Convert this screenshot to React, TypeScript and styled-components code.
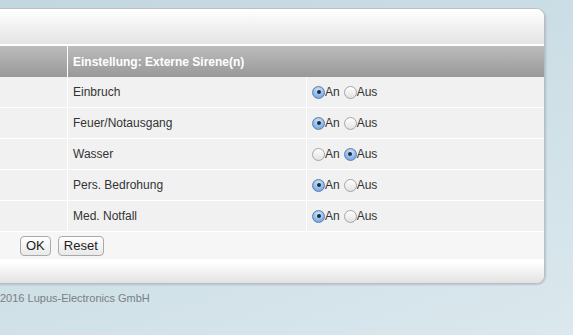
import styled, { createGlobalStyle } from "styled-components";

const Global = createGlobalStyle`
  html, body {
    margin: 0;
    height: 100%;
  }
  body {
    background: linear-gradient(160deg, #c3d7df 0%, #cfe0e7 55%, #dbe8ee 100%);
    font-family: "Liberation Sans", Arial, sans-serif;
    overflow: hidden;
  }
`;

const Page = styled.div`
  width: 573px;
  height: 335px;
  padding-top: 8px;
  box-sizing: border-box;
`;

const Panel = styled.div`
  margin-left: -12px;
  width: 557px;
  border-radius: 9px;
  border: 1px solid #b9c0c4;
  box-sizing: border-box;
  background: #fff;
  overflow: hidden;
  box-shadow: 1px 1px 2px rgba(0, 0, 0, 0.15);
`;

const Top = styled.div`
  height: 35px;
  background: linear-gradient(#ffffff, #e4e4e4);
  border-bottom: 2px solid #fff;
`;

const Row = styled.div`
  display: grid;
  grid-template-columns: 79px 239px 1fr;
  height: 30px;
  background: #f1f1f1;
  border-bottom: 1px solid #fff;
`;

const HeadRow = styled.div`
  display: grid;
  grid-template-columns: 79px 1fr;
  height: 31px;
  background: linear-gradient(#bcbcbc, #999);
`;

const Cell = styled.div<{ $head?: boolean }>`
  display: flex;
  align-items: center;
  padding-left: 5px;
  border-right: 1px solid #fff;
  font-size: 12px;
  color: ${(p) => (p.$head ? "#fff" : "#333")};
  font-weight: ${(p) => (p.$head ? "bold" : "normal")};
  &:last-child {
    border-right: 0;
  }
`;

const Choice = styled.label`
  display: inline-flex;
  align-items: center;
  margin-right: 4px;
  font-size: 12px;
  color: #333;
`;

const Radio = styled.span<{ $on: boolean }>`
  width: 13px;
  height: 13px;
  border-radius: 50%;
  box-sizing: border-box;
  display: inline-flex;
  align-items: center;
  justify-content: center;
  border: 1px solid ${(p) => (p.$on ? "#5a7fae" : "#a5a5a5")};
  background: ${(p) =>
    p.$on
      ? "radial-gradient(circle at 50% 30%, #d4e7fb 0%, #8ab6e8 60%, #6a9ad6 100%)"
      : "linear-gradient(#ffffff, #e2e2e2)"};
  &::after {
    content: "";
    width: 4px;
    height: 4px;
    border-radius: 50%;
    background: #1f2a3a;
    display: ${(p) => (p.$on ? "block" : "none")};
  }
`;

const Actions = styled.div`
  display: flex;
  gap: 7px;
  height: 27px;
  align-items: center;
  padding-left: 31px;
  background: #f6f6f6;
`;

const Button = styled.button`
  font-family: "Liberation Sans", Arial, sans-serif;
  font-size: 13px;
  color: #222;
  height: 20px;
  padding: 0 5px;
  border: 1px solid #a9a9a9;
  border-radius: 4px;
  background: linear-gradient(#ffffff, #e9e9e9);
  line-height: 18px;
`;

const Bottom = styled.div`
  height: 24px;
  background: linear-gradient(#ffffff 15%, #e2e2e2);
`;

const Footer = styled.div`
  margin-top: 8px;
  font-size: 11px;
  color: #7a7f82;
`;

const rows: [string, boolean][] = [
  ["Einbruch", true],
  ["Feuer/Notausgang", true],
  ["Wasser", false],
  ["Pers. Bedrohung", true],
  ["Med. Notfall", true],
];

export default function App() {
  return (
    <Page>
      <Global />
      <Panel>
        <Top />
        <HeadRow>
          <Cell $head />
          <Cell $head>Einstellung: Externe Sirene(n)</Cell>
        </HeadRow>
        {rows.map(([name, on]) => (
          <Row key={name}>
            <Cell />
            <Cell>{name}</Cell>
            <Cell>
              <Choice>
                <Radio $on={on} />
                An
              </Choice>
              <Choice>
                <Radio $on={!on} />
                Aus
              </Choice>
            </Cell>
          </Row>
        ))}
        <Actions>
          <Button>OK</Button>
          <Button>Reset</Button>
        </Actions>
        <Bottom />
      </Panel>
      <Footer>2016 Lupus-Electronics GmbH</Footer>
    </Page>
  );
}
